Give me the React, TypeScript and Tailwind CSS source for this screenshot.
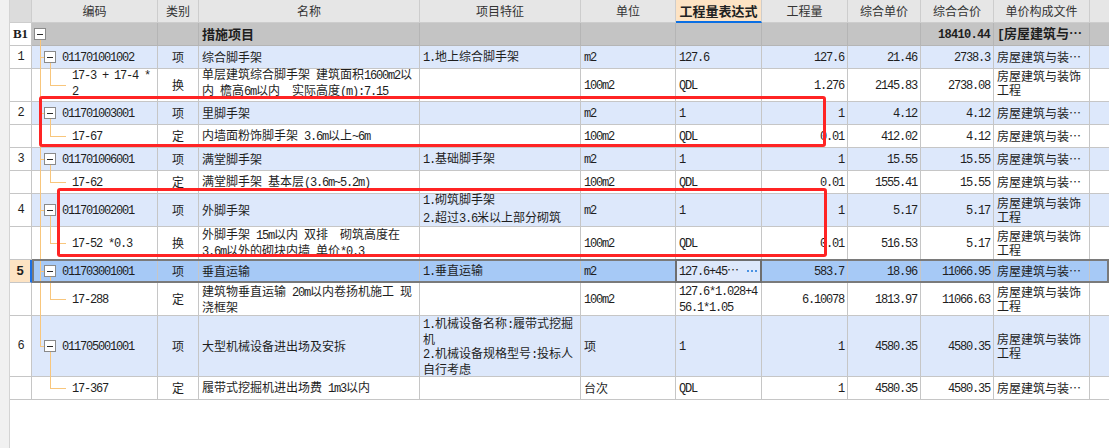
import React from "react";

type R = {
  kind: "b1" | "item" | "child";
  h: 23 | 33 | 61;
  num?: string;
  code: string[];
  type: string;
  name: string[];
  feat: string[];
  unit: string;
  expr: string[];
  qty: string;
  price: string;
  total: string;
  file: string[];
  sel?: boolean;
  last?: boolean;
  trunk?: boolean;
  wideFeat?: boolean;
  up?: boolean;
};

const H: Record<number, string> = { 23: "h-[23px]", 33: "h-[33px]", 61: "h-[61px]" };

const MONO = "font-['Liberation_Mono',monospace] tracking-[-1.2px]";
const MONO_B = "font-['Liberation_Mono',monospace] tracking-[-0.7px] font-bold";

function Mixed({ s, bold }: { s: string; bold?: boolean }) {
  const parts = s.match(/[\x20-\x7e]+|[^\x20-\x7e]+/g) || [];
  return (
    <>
      {parts.map((p, i) =>
        /^[\x20-\x7e]/.test(p) ? (
          <span key={i} className={bold ? MONO_B : MONO}>
            {p}
          </span>
        ) : (
          <span key={i}>{p}</span>
        )
      )}
    </>
  );
}

function Lines({ lines, align, bold, extra }: { lines: string[]; align: string; bold?: boolean; extra?: string }) {
  return (
    <div className={`w-full ${align} ${extra || ""}`}>
      {lines.map((l, i) => (
        <div key={i} className="whitespace-pre">
          <Mixed s={l} bold={bold} />
        </div>
      ))}
    </div>
  );
}

const rows: R[] = [
  { kind: "b1", h: 23, num: "B1", code: [], type: "", name: ["措施项目"], feat: [], unit: "", expr: [], qty: "", price: "", total: "18410.44", file: ["[房屋建筑与⋯"] },
  { kind: "item", h: 23, num: "1", code: ["011701001002"], type: "项", name: ["综合脚手架"], feat: ["1.地上综合脚手架"], unit: "m2", expr: ["127.6"], qty: "127.6", price: "21.46", total: "2738.3", file: ["房屋建筑与装⋯"] },
  { kind: "child", h: 33, trunk: true, up: true, code: ["17-3 + 17-4 *", "2"], type: "换", name: ["单层建筑综合脚手架 建筑面积1600m2以", "内 檐高6m以内  实际高度(m):7.15"], feat: [], unit: "100m2", expr: ["QDL"], qty: "1.276", price: "2145.83", total: "2738.08", file: ["房屋建筑与装饰", "工程"] },
  { kind: "item", h: 23, num: "2", code: ["011701003001"], type: "项", name: ["里脚手架"], feat: [], unit: "m2", expr: ["1"], qty: "1", price: "4.12", total: "4.12", file: ["房屋建筑与装⋯"] },
  { kind: "child", h: 23, trunk: true, code: ["17-67"], type: "定", name: ["内墙面粉饰脚手架 3.6m以上~6m"], feat: [], unit: "100m2", expr: ["QDL"], qty: "0.01", price: "412.02", total: "4.12", file: ["房屋建筑与装⋯"] },
  { kind: "item", h: 23, num: "3", code: ["011701006001"], type: "项", name: ["满堂脚手架"], feat: ["1.基础脚手架"], unit: "m2", expr: ["1"], qty: "1", price: "15.55", total: "15.55", file: ["房屋建筑与装⋯"] },
  { kind: "child", h: 23, trunk: true, code: ["17-62"], type: "定", name: ["满堂脚手架 基本层(3.6m~5.2m)"], feat: [], unit: "100m2", expr: ["QDL"], qty: "0.01", price: "1555.41", total: "15.55", file: ["房屋建筑与装⋯"] },
  { kind: "item", h: 33, num: "4", wideFeat: true, code: ["011701002001"], type: "项", name: ["外脚手架"], feat: ["1.砌筑脚手架", "2.超过3.6米以上部分砌筑"], unit: "m2", expr: ["1"], qty: "1", price: "5.17", total: "5.17", file: ["房屋建筑与装饰", "工程"] },
  { kind: "child", h: 33, trunk: true, code: ["17-52 *0.3"], type: "换", name: ["外脚手架 15m以内 双排  砌筑高度在", "3.6m以外的砌块内墙 单价*0.3"], feat: [], unit: "100m2", expr: ["QDL"], qty: "0.01", price: "516.53", total: "5.17", file: ["房屋建筑与装饰", "工程"] },
  { kind: "item", h: 23, num: "5", sel: true, code: ["011703001001"], type: "项", name: ["垂直运输"], feat: ["1.垂直运输"], unit: "m2", expr: ["127.6+45⋯"], qty: "583.7", price: "18.96", total: "11066.95", file: ["房屋建筑与装⋯"] },
  { kind: "child", h: 33, trunk: true, code: ["17-288"], type: "定", name: ["建筑物垂直运输 20m以内卷扬机施工 现", "浇框架"], feat: [], unit: "100m2", expr: ["127.6*1.028+4", "56.1*1.05"], qty: "6.10078", price: "1813.97", total: "11066.63", file: ["房屋建筑与装饰", "工程"] },
  { kind: "item", h: 61, num: "6", last: true, code: ["011705001001"], type: "项", name: ["大型机械设备进出场及安拆"], feat: ["1.机械设备名称:履带式挖掘", "机", "2.机械设备规格型号:投标人", "自行考虑"], unit: "项", expr: ["1"], qty: "1", price: "4580.35", total: "4580.35", file: ["房屋建筑与装饰", "工程"] },
  { kind: "child", h: 23, trunk: false, code: ["17-367"], type: "定", name: ["履带式挖掘机进出场费 1m3以内"], feat: [], unit: "台次", expr: ["QDL"], qty: "1", price: "4580.35", total: "4580.35", file: ["房屋建筑与装⋯"] },
];

const LINE = "absolute bg-[#f8c67c]";

function MinusBox({ left }: { left: string }) {
  return (
    <div className={`absolute ${left} top-1/2 -translate-y-1/2 w-[12px] h-[12px] border border-[#8a8a8a] bg-white flex items-center justify-center z-10`}>
      <div className="w-[6px] h-px bg-[#2a2a2a]" />
    </div>
  );
}

function Tree({ r }: { r: R }) {
  if (r.kind === "b1") {
    return (
      <>
        <MinusBox left="left-[2px]" />
        <div className={`${LINE} left-[8px] w-px top-[calc(50%+6px)] bottom-[-1px]`} />
      </>
    );
  }
  if (r.kind === "item") {
    return (
      <>
        {r.last ? (
          <div className={`${LINE} left-[8px] w-px top-[-1px] h-[calc(50%+1px)]`} />
        ) : (
          <div className={`${LINE} left-[8px] w-px top-[-1px] bottom-[-1px]`} />
        )}
        <div className={`${LINE} left-[8px] w-[5px] h-px top-1/2`} />
        <MinusBox left="left-[12px]" />
        <div className={`${LINE} left-[18px] w-px top-[calc(50%+6px)] bottom-[-1px]`} />
      </>
    );
  }
  return (
    <>
      {r.trunk && <div className={`${LINE} left-[8px] w-px top-[-1px] bottom-[-1px]`} />}
      <div className={`${LINE} left-[18px] w-px top-[-1px] h-[calc(50%+1px)]`} />
      <div className={`${LINE} left-[18px] w-[16px] h-px top-1/2`} />
    </>
  );
}

function Row({ r }: { r: R }) {
  const isB1 = r.kind === "b1";
  const bg = isB1 ? "bg-[#c4c4c4]" : r.sel ? "bg-[#a6c9f6]" : r.kind === "item" ? "bg-[#dde8fb]" : "bg-white";
  const bc = isB1 ? "border-[#b5b5b5]" : "border-[#c6c6c6]";
  const cell = `shrink-0 h-full border-r border-b ${bc} ${bg} flex items-center px-[3px]`;
  const up = r.up ? "pb-[4px]" : "";
  const numCls = r.sel
    ? "bg-[#fde3c3] border-r-2 border-r-[#1c6fe3] font-bold"
    : "bg-white border-r border-r-[#c6c6c6]";
  return (
    <div className={`relative flex ${H[r.h]}`}>
      <div className={`w-[22px] shrink-0 h-full border-b border-b-[#c6c6c6] ${numCls} flex items-center justify-center`}>
        {isB1 ? (
          <span className="font-['Liberation_Serif',serif] font-bold text-[13px]">{r.num}</span>
        ) : r.sel ? (
          <span className="font-['Liberation_Sans',sans-serif] font-bold text-[13px]">{r.num}</span>
        ) : (
          <Mixed s={r.num || ""} />
        )}
      </div>
      <div className={`relative w-[126px] shrink-0 h-full border-r border-b ${bc} ${bg} flex items-center ${r.kind === "child" ? "pl-[40px]" : "pl-[30px]"} pr-[3px]`}>
        <Tree r={r} />
        <Lines lines={r.code} align="text-left" extra={up} />
      </div>
      <div className={`w-[41px] ${cell} justify-center`}>
        <span>{r.type}</span>
      </div>
      <div className={`w-[221px] ${cell}`}>
        {isB1 ? (
          <span className="font-bold text-[13px]">{r.name[0]}</span>
        ) : (
          <Lines lines={r.name} align="text-left" extra={up} />
        )}
      </div>
      <div className={`w-[161px] ${cell}`}>
        <Lines lines={r.feat} align="text-left" extra={r.wideFeat ? "leading-[16px] pb-[2px]" : ""} />
      </div>
      <div className={`w-[95px] ${cell}`}>
        <Lines lines={[r.unit]} align="text-left" />
      </div>
      <div className={`w-[86px] shrink-0 h-full border-r border-b ${bc} ${r.sel ? "bg-[#dde8fb]" : bg} flex items-center px-[3px]`}>
        <Lines lines={r.expr} align="text-left" />
        {r.sel && (
          <div className="ml-auto mr-[1px] flex gap-[2px] items-center shrink-0">
            <div className="w-[2px] h-[2px] bg-[#4a92e2]" />
            <div className="w-[2px] h-[2px] bg-[#4a92e2]" />
            <div className="w-[2px] h-[2px] bg-[#4a92e2]" />
          </div>
        )}
      </div>
      <div className={`w-[86px] ${cell}`}>
        <Lines lines={[r.qty]} align="text-right" />
      </div>
      <div className={`w-[73px] ${cell}`}>
        <Lines lines={[r.price]} align="text-right" />
      </div>
      <div className={`w-[73px] ${cell}`}>
        <Lines lines={[r.total]} align="text-right" bold={isB1} />
      </div>
      <div className={`w-[96px] ${cell}`}>
        {isB1 ? (
          <div className="whitespace-pre font-bold text-[13px]">
            <Mixed s={r.file[0]} bold />
          </div>
        ) : (
          <Lines lines={r.file} align="text-left" extra={up} />
        )}
      </div>
      <div className={`w-[19px] shrink-0 h-full border-b ${bc} ${bg}`} />
      {r.sel && (
        <>
          <div className="absolute left-[22px] right-0 top-[-1px] bottom-0 border-2 border-[#7a7a7a] pointer-events-none z-20" />
          <div className="absolute left-[665px] w-[87px] top-[-1px] bottom-0 border-2 border-[#6e6e6e] pointer-events-none z-20" />
        </>
      )}
    </div>
  );
}

function Header() {
  const hc = "shrink-0 h-full border-r border-b border-[#cdcdcd] bg-[#e6e6e6] flex items-center justify-center text-[#333] text-[12px]";
  return (
    <div className="flex h-[23px]">
      <div className="w-[22px] shrink-0 h-full border-r border-b border-[#cdcdcd] bg-[#dcdcdc]" />
      <div className={`w-[126px] ${hc}`}>编码</div>
      <div className={`w-[41px] ${hc}`}>类别</div>
      <div className={`w-[221px] ${hc}`}>名称</div>
      <div className={`w-[161px] ${hc}`}>项目特征</div>
      <div className={`w-[95px] ${hc}`}>单位</div>
      <div className="w-[86px] shrink-0 h-full border-r border-r-[#cdcdcd] border-b-2 border-b-[#0b6fe3] bg-[#fde3c4] flex items-center justify-center font-bold text-[13px] text-[#222]">
        工程量表达式
      </div>
      <div className={`w-[86px] ${hc}`}>工程量</div>
      <div className={`w-[73px] ${hc}`}>综合单价</div>
      <div className={`w-[73px] ${hc}`}>综合合价</div>
      <div className={`w-[96px] ${hc}`}>单价构成文件</div>
      <div className="w-[19px] shrink-0 h-full border-b border-[#cdcdcd] bg-[#e6e6e6]" />
    </div>
  );
}

export default function App() {
  return (
    <div className="relative w-[1109px] h-[448px] overflow-hidden bg-white flex font-['Noto_Sans_CJK_SC',sans-serif] text-[12px] leading-[14px] text-[#1e1e1e]">
      <div className="w-[10px] shrink-0 h-full bg-[#f1f1f1] border-r border-[#d4d4d4]" />
      <div className="flex-1 flex flex-col">
        <Header />
        {rows.map((r, i) => (
          <Row key={i} r={r} />
        ))}
      </div>
      <div className="absolute left-[39px] top-[96px] w-[787px] h-[51px] border-[3px] border-[#ff2424] rounded-[3px] pointer-events-none z-30" />
      <div className="absolute left-[57px] top-[188px] w-[770px] h-[69px] border-[3px] border-[#ff2424] rounded-[3px] pointer-events-none z-30" />
    </div>
  );
}
